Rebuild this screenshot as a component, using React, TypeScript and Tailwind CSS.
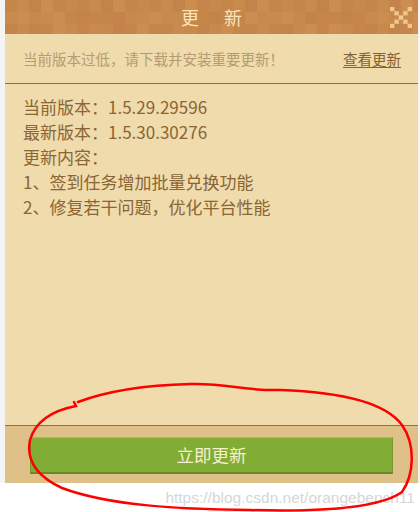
import React from 'react';

const shades = ['#c6864a', '#c98a4d', '#c3834a', '#cb8e50', '#c5854b', '#c88a4c'];

// pixel texture of the title bar
const HeaderTexture = () => {
    const cells: React.ReactNode[] = [];
    for (let r = 0; r < 3; r++) {
        for (let c = 0; c < 35; c++) {
            const k = (r * 7 + c * 13 + ((c * r) % 5)) % shades.length;
            cells.push(<rect key={`${r}-${c}`} x={c * 12} y={r * 12} width={12} height={12} fill={shades[k]} />);
        }
    }
    return (
        <svg className="absolute inset-0" width="413" height="34" viewBox="0 0 413 34">
            {cells}
        </svg>
    );
};

const PixelClose = () => {
    const pts: [number, number][] = [[0, 0], [4, 0], [1, 1], [3, 1], [2, 2], [1, 3], [3, 3], [0, 4], [4, 4]];
    return (
        <svg width="22" height="21" viewBox="0 0 22 21">
            {pts.map(([x, y], i) => (
                <rect
                    key={i}
                    x={x * 4.4}
                    y={y * 4.2}
                    width={4.4}
                    height={4.2}
                    fill={x === 2 ? '#f2cf98' : (x + y) % 2 === 0 ? '#f0c88e' : '#e9bd82'}
                />
            ))}
        </svg>
    );
};

const App = () => {
    const font = { fontFamily: '"Noto Sans CJK SC", "Noto Sans", sans-serif' };
    return (
        <div className="relative w-[420px] h-[512px] bg-white overflow-hidden" style={font}>
            <div className="flex h-[483px]">
                <div className="w-[5px] bg-[#f4f4f4]" />
                <div className="w-[413px] flex flex-col bg-[#efdbab]">
                    <div className="relative h-[34px] bg-[#c6864a] flex items-center justify-center">
                        <HeaderTexture />
                        <div className="relative flex gap-[25px] text-[18px] leading-none text-[#fbe5b8]">
                            <span>更</span>
                            <span>新</span>
                        </div>
                        <div className="absolute right-[6px] top-[7px]">
                            <PixelClose />
                        </div>
                    </div>
                    <div className="h-[50px] flex items-center justify-between pl-[18px] pr-[17px] border-b border-[#9b6c37]">
                        <span className="text-[14.5px] text-[#b49b73]">当前版本过低，请下载并安装重要更新！</span>
                        <span className="text-[14.5px] text-[#87602f] underline underline-offset-2">查看更新</span>
                    </div>
                    <div className="flex-1 pt-[10px] pl-[18px] text-[17px] leading-[25px] text-[#8a6536]">
                        <div>当前版本：1.5.29.29596</div>
                        <div>最新版本：1.5.30.30276</div>
                        <div>更新内容：</div>
                        <div>1、签到任务增加批量兑换功能</div>
                        <div>2、修复若干问题，优化平台性能</div>
                    </div>
                    <div className="h-[58px] border-t border-[#9b6c37] bg-[#dfc089] px-[25px] pt-[11px]">
                        <button className="w-full h-[37px] bg-[#82ad35] border border-[#74992e] border-t-[#9cc54f] border-b-2 border-b-[#66892a] text-[17.5px] text-[#f6f1cc] flex items-center justify-center">
                            立即更新
                        </button>
                    </div>
                </div>
                <div className="w-[2px] bg-[#f4f4f4]" />
            </div>
            <div className="flex justify-end pr-[5px] pt-[3px]">
                <span className="text-[15.5px] text-[#d6d6d6]" style={{ fontFamily: '"Liberation Sans", Arial, sans-serif' }}>
                    https://blog.csdn.net/orangebench11
                </span>
            </div>
            {/* hand-drawn red circle annotation */}
            <svg className="absolute inset-0 pointer-events-none" width="420" height="512" viewBox="0 0 420 512">
                <path
                    d="M78 402 C 110 390, 150 385, 190 384 C 230 383, 240 391, 280 390 C 340 392, 385 402, 402 425 C 416 445, 414 475, 402 492 C 380 508, 320 512, 250 510 C 180 509, 110 506, 62 488 C 36 476, 26 460, 30 440 C 36 420, 55 410, 76 406 L 74 402"
                    fill="none"
                    stroke="#ff0000"
                    strokeWidth="2.5"
                    strokeLinecap="round"
                />
            </svg>
        </div>
    );
};

export default App;
